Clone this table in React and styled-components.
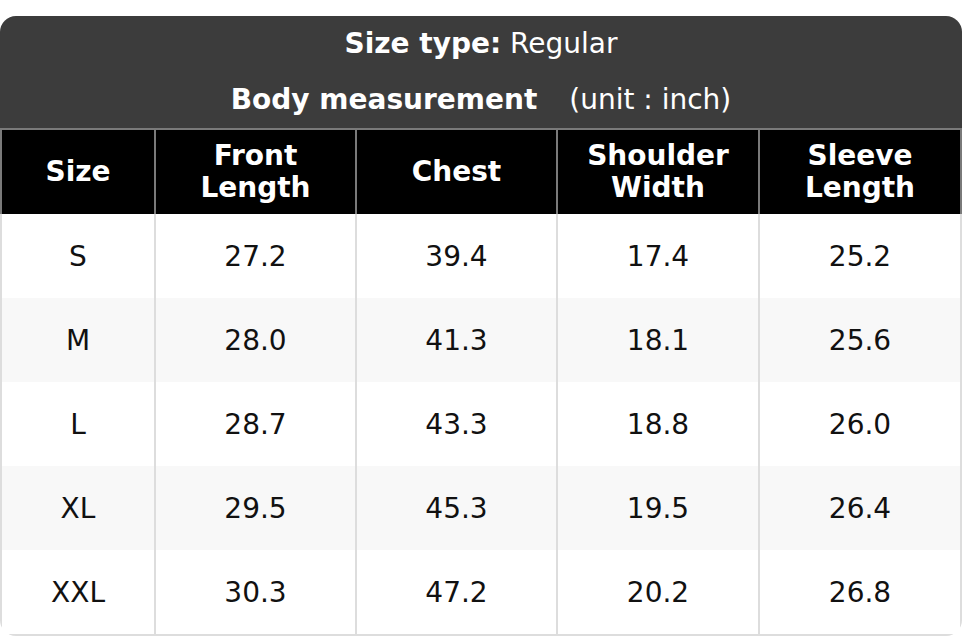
import React from 'react';
import styled, { createGlobalStyle } from 'styled-components';

const GlobalStyle = createGlobalStyle`
    html, body {
        margin: 0;
        padding: 0;
        background: #ffffff;
        font-family: "DejaVu Sans", Verdana, sans-serif;
    }
`;

const columns = ['Size', 'Front\nLength', 'Chest', 'Shoulder\nWidth', 'Sleeve\nLength'];
const widths = [154, 201, 201, 202, 204];

const rows = [
    ['S', '27.2', '39.4', '17.4', '25.2'],
    ['M', '28.0', '41.3', '18.1', '25.6'],
    ['L', '28.7', '43.3', '18.8', '26.0'],
    ['XL', '29.5', '45.3', '19.5', '26.4'],
    ['XXL', '30.3', '47.2', '20.2', '26.8'],
];

const SizeChart = () => {
    return (
        <ChartCard>
            <TitleBar>
                <TitleLine>
                    <strong>Size type:</strong> Regular
                </TitleLine>
                <TitleLine>
                    <strong>Body measurement</strong>
                    <Unit>(unit : inch)</Unit>
                </TitleLine>
            </TitleBar>
            <Table>
                <colgroup>
                    {widths.map((w, i) => <col key={i} style={{ width: w }} />)}
                </colgroup>
                <thead>
                    <tr>
                        {columns.map((c) => <HeadCell key={c}>{c}</HeadCell>)}
                    </tr>
                </thead>
                <tbody>
                    {rows.map((r, i) => (
                        <Row key={r[0]} $striped={i % 2 === 1}>
                            {r.map((v, j) => <Cell key={j}>{v}</Cell>)}
                        </Row>
                    ))}
                </tbody>
            </Table>
        </ChartCard>
    );
};

const ChartCard = styled.div`
    margin-top: 16px;
    width: 962px;
    border-radius: 16px;
    overflow: hidden;
    background: #ffffff;
`;

const TitleBar = styled.div`
    background: #3c3c3c;
    color: #ffffff;
    padding: 10px 0;
    display: flex;
    flex-direction: column;
    align-items: center;
    gap: 20px;
`;

const TitleLine = styled.div`
    font-size: 28px;
    line-height: 36px;
    height: 36px;
    text-align: center;
    strong {
        font-weight: bold;
    }
`;

const Unit = styled.span`
    margin-left: 32px;
`;

const Table = styled.table`
    width: 962px;
    table-layout: fixed;
    border-collapse: separate;
    border-spacing: 0;
`;

const HeadCell = styled.th`
    background: #000000;
    color: #ffffff;
    font-size: 28px;
    font-weight: bold;
    line-height: 32px;
    height: 86px;
    box-sizing: border-box;
    padding: 0 6px;
    white-space: pre-line;
    text-align: center;
    vertical-align: middle;
    border-top: 2px solid #7a7a7a;
    border-left: 2px solid #7a7a7a;
    &:last-child {
        border-right: 2px solid #7a7a7a;
    }
`;

const Row = styled.tr`
    background: ${(p) => (p.$striped ? '#f8f8f8' : '#ffffff')};
    &:last-child td {
        height: 86px;
        border-bottom: 2px solid #dddddd;
    }
`;

const Cell = styled.td`
    font-size: 28px;
    color: #111111;
    height: 84px;
    box-sizing: border-box;
    padding: 0;
    text-align: center;
    vertical-align: middle;
    border-left: 2px solid #dddddd;
    &:last-child {
        border-right: 2px solid #dddddd;
    }
`;

const App = () => (
    <>
        <GlobalStyle />
        <SizeChart />
    </>
);

export default App;
